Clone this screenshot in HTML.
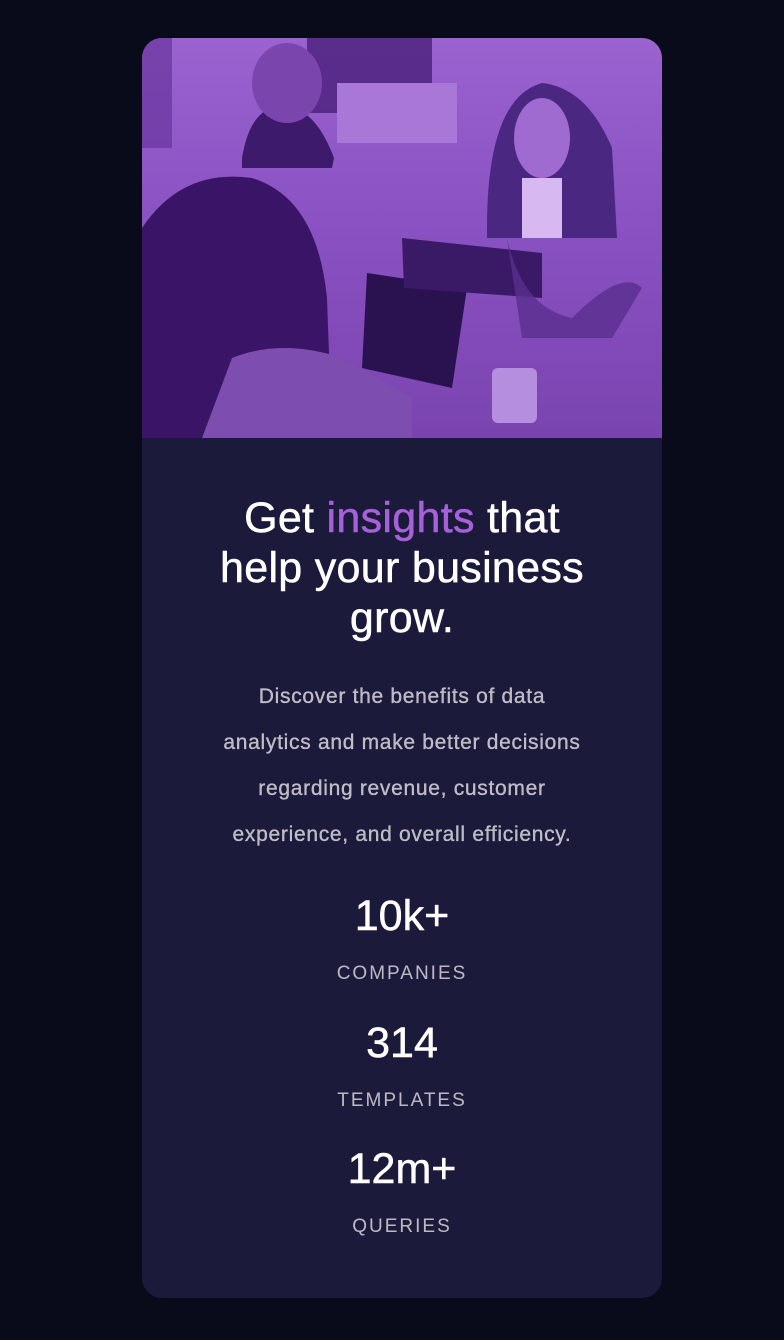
<!DOCTYPE html>
<html><head><meta charset="utf-8"><style>
*{margin:0;padding:0;box-sizing:border-box}
body{width:784px;height:1340px;background:#090b1a;font-family:"Liberation Sans",sans-serif;position:relative;overflow:hidden}
.card{position:absolute;left:142px;top:38px;width:520px;height:1260px;background:#1c1a3b;border-radius:20px;overflow:hidden}
.img{position:absolute;left:0;top:0;width:520px;height:400px;background:linear-gradient(180deg,#9a63d0 0%,#8a52c2 45%,#7a44b0 100%);overflow:hidden}
.t{position:absolute;left:0;width:520px;text-align:center;color:#fff}
h1{position:absolute;left:0;top:455px;width:520px;text-align:center;color:#fff;font-size:43px;line-height:50px;font-weight:normal;-webkit-text-stroke:0.5px #fff;letter-spacing:0.3px}
h1 span{color:#a660d8;-webkit-text-stroke:0.5px #a660d8}
p{position:absolute;left:0;top:636px;width:520px;text-align:center;color:rgba(255,255,255,.7);font-size:21px;line-height:46px;letter-spacing:0.7px;-webkit-text-stroke:0.3px rgba(255,255,255,.6)}
.n{font-size:43px;-webkit-text-stroke:0.5px #fff}
.l{font-size:19px;letter-spacing:2px;color:rgba(255,255,255,.7)}
</style></head><body>
<div class="card">
<div class="img">
<svg width="520" height="400" viewBox="0 0 520 400">
<rect x="0" y="0" width="30" height="110" fill="#6a349e" opacity=".7"/>
<rect x="165" y="0" width="125" height="75" fill="#4a1f7a" opacity=".8"/>
<rect x="195" y="45" width="120" height="60" fill="#a877d8"/>
<path d="M100 120 Q110 60 150 70 Q175 75 192 120 L190 130 L100 130Z" fill="#3e1a6c"/>
<ellipse cx="145" cy="45" rx="35" ry="40" fill="#7b45ae"/>
<path d="M0 400 L0 190 Q40 130 110 140 Q175 160 185 260 L190 400Z" fill="#3a1567"/>
<path d="M60 400 L90 320 Q140 300 200 320 L270 360 L270 400Z" fill="#7d4db0"/>
<path d="M225 235 L325 250 L310 350 L220 330Z" fill="#2a1250"/>
<path d="M260 200 L400 215 L400 260 L262 250Z" fill="#3a1a66"/>
<path d="M345 190 Q345 60 400 45 Q445 50 470 110 L475 200 L345 200Z" fill="#4a2780"/>
<ellipse cx="400" cy="100" rx="28" ry="40" fill="#9f6bd0"/>
<rect x="380" y="140" width="40" height="60" fill="#d8b8f0"/>
<path d="M365 200 Q380 270 430 280 Q480 230 500 250 L470 300 L380 300Z" fill="#5a2e8e" opacity=".8"/>
<rect x="350" y="330" width="45" height="55" rx="6" fill="#b68ee0"/>
</svg>
</div>
<h1>Get <span>insights</span> that<br>help your business<br>grow.</h1>
<p>Discover the benefits of data<br>analytics and make better decisions<br>regarding revenue, customer<br>experience, and overall efficiency.</p>
<div class="t n" style="top:854px">10k+</div>
<div class="t l" style="top:925px">COMPANIES</div>
<div class="t n" style="top:981px">314</div>
<div class="t l" style="top:1052px">TEMPLATES</div>
<div class="t n" style="top:1107px">12m+</div>
<div class="t l" style="top:1178px">QUERIES</div>
</div>
</body></html>
